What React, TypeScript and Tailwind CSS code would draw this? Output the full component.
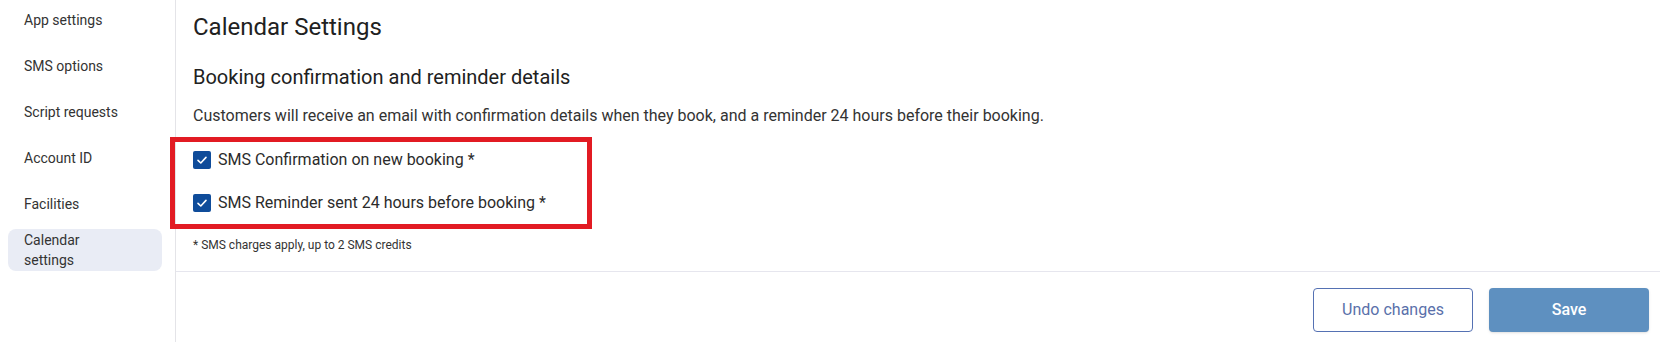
import React from "react";

const navItems = ["App settings", "SMS options", "Script requests", "Account ID", "Facilities"];

function Check() {
  return (
    <span className="flex h-[18px] w-[18px] shrink-0 items-center justify-center rounded-[2px] bg-[#0f4c9a]">
      <svg width="12" height="12" viewBox="0 0 12 12" fill="none">
        <path d="M2 6.3L4.8 9L10 3.4" stroke="white" strokeWidth="1.6" strokeLinecap="round" strokeLinejoin="round" />
      </svg>
    </span>
  );
}

export default function App() {
  return (
    <div className="flex h-[342px] w-[1660px] overflow-hidden bg-white text-[#2b2b2b]" style={{ fontFamily: "Roboto, 'Liberation Sans', sans-serif" }}>
      <aside className="w-[176px] shrink-0 border-r border-[#e4e4e8] pl-2 pr-[13px]">
        <ul className="-mt-[1px] flex flex-col gap-1">
          {navItems.map((n) => (
            <li key={n} className="flex h-[42px] items-center pl-4 text-[14px] leading-5 text-[#333]">
              {n}
            </li>
          ))}
          <li className="flex h-[42px] items-center rounded-lg bg-[#e9ecf5] pl-4 text-[14px] leading-5 text-[#333]">
            Calendar
            <br />
            settings
          </li>
        </ul>
      </aside>
      <main className="flex flex-1 flex-col">
        <div className="border-b border-[#e6e6ee] pb-[18px] pl-[17px] pt-[11px]">
          <h1 className="text-[24px] leading-8 text-[#212121]">Calendar Settings</h1>
          <h2 className="mt-5 text-[20px] leading-7 text-[#212121]">Booking confirmation and reminder details</h2>
          <p className="mt-[13px] text-[16px] leading-6 text-[#333]">
            Customers will receive an email with confirmation details when they book, and a reminder 24 hours before their booking.
          </p>
          <div className="relative mt-[18px] flex flex-col gap-[15px]">
            <label className="flex h-7 items-center gap-[7px] text-[16px] text-[#2b2b2b]">
              <Check />
              SMS Confirmation on new booking *
            </label>
            <label className="flex h-7 items-center gap-[7px] text-[16px] text-[#2b2b2b]">
              <Check />
              SMS Reminder sent 24 hours before booking *
            </label>
            <div className="pointer-events-none absolute left-[-23px] top-[-9px] h-[92px] w-[422px] border-[5px] border-[#e21b23]" />
          </div>
          <p className="mt-5 text-[12px] leading-4 text-[#333]">* SMS charges apply, up to 2 SMS credits</p>
        </div>
        <div className="flex justify-end gap-4 pr-[11px] pt-4">
          <button className="h-[44px] w-[160px] rounded-[4px] border border-[#5571b3] bg-white text-[16px] text-[#5a70aa]">
            Undo changes
          </button>
          <button className="h-[44px] w-[160px] rounded-[4px] bg-[#5e90c0] text-[16px] font-medium text-white shadow-sm">
            Save
          </button>
        </div>
      </main>
    </div>
  );
}
